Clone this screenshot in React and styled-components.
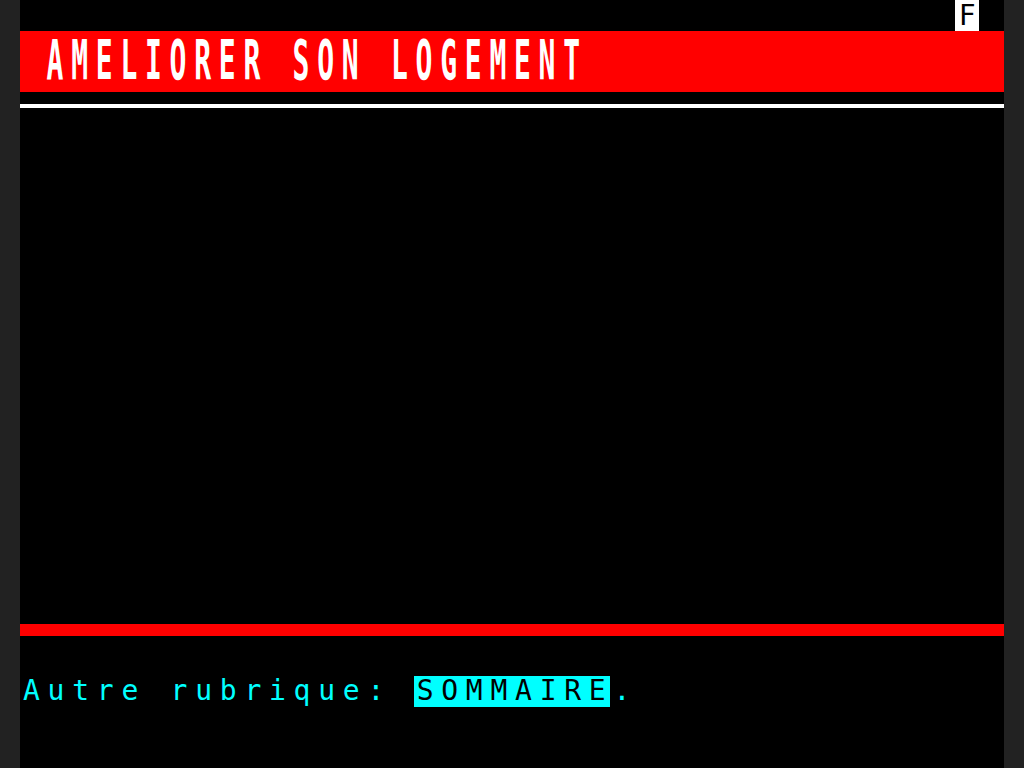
import styled, { createGlobalStyle } from "styled-components";

const COL = 984 / 40;
const ROW = 768 / 25;

const Global = createGlobalStyle`
  html, body {
    margin: 0;
    padding: 0;
    background: #222222;
    overflow: hidden;
  }
`;

const Screen = styled.div`
  width: 984px;
  height: 768px;
  margin: 0 20px;
  background: #000;
  display: flex;
  flex-direction: column;
  font-family: "DejaVu Sans Mono", "Liberation Mono", monospace;
  font-size: 28px;
  letter-spacing: ${COL - 28 * 0.602}px;
`;

const TopRow = styled.div`
  height: 31px;
  display: flex;
  justify-content: flex-end;
  padding-right: ${COL}px;
`;

const StatusCell = styled.div`
  width: ${COL}px;
  height: 31px;
  background: #fff;
  color: #000;
  line-height: 31px;
  letter-spacing: 0;
  text-align: center;
`;

const TitleBar = styled.div`
  height: 61px;
  background: #ff0000;
  display: flex;
  align-items: flex-end;
  padding-left: ${COL + 2}px;
`;

const Title = styled.h1`
  margin: 0 0 9px;
  font-size: 28px;
  font-weight: bold;
  color: #fff;
  line-height: 22px;
  height: 22px;
  transform: scaleY(2);
  transform-origin: bottom left;
  white-space: pre;
`;

const Rule = styled.div`
  height: ${(p) => p.$thick}px;
  margin-top: ${(p) => p.$top}px;
  background: ${(p) => p.$color};
`;

const Footer = styled.div`
  margin-top: 40px;
  height: ${ROW}px;
  line-height: ${ROW}px;
  color: #00ffff;
  white-space: pre;
  padding-left: 3px;
`;

const Key = styled.span`
  display: inline-block;
  box-sizing: border-box;
  width: ${COL * 8}px;
  height: ${ROW}px;
  margin-left: -3px;
  margin-right: 3px;
  padding-left: 3px;
  background: #00ffff;
  color: #000;
  vertical-align: top;
  white-space: nowrap;
`;

export default function App() {
  return (
    <>
      <Global />
      <Screen>
        <TopRow>
          <StatusCell>F</StatusCell>
        </TopRow>
        <TitleBar>
          <Title>AMELIORER SON LOGEMENT</Title>
        </TitleBar>
        <Rule $top={12} $thick={4} $color="#fff" />
        <Rule $top={516} $thick={12} $color="#ff0000" />
        <Footer>
          {"Autre rubrique: "}
          <Key>SOMMAIRE</Key>.
        </Footer>
      </Screen>
    </>
  );
}
